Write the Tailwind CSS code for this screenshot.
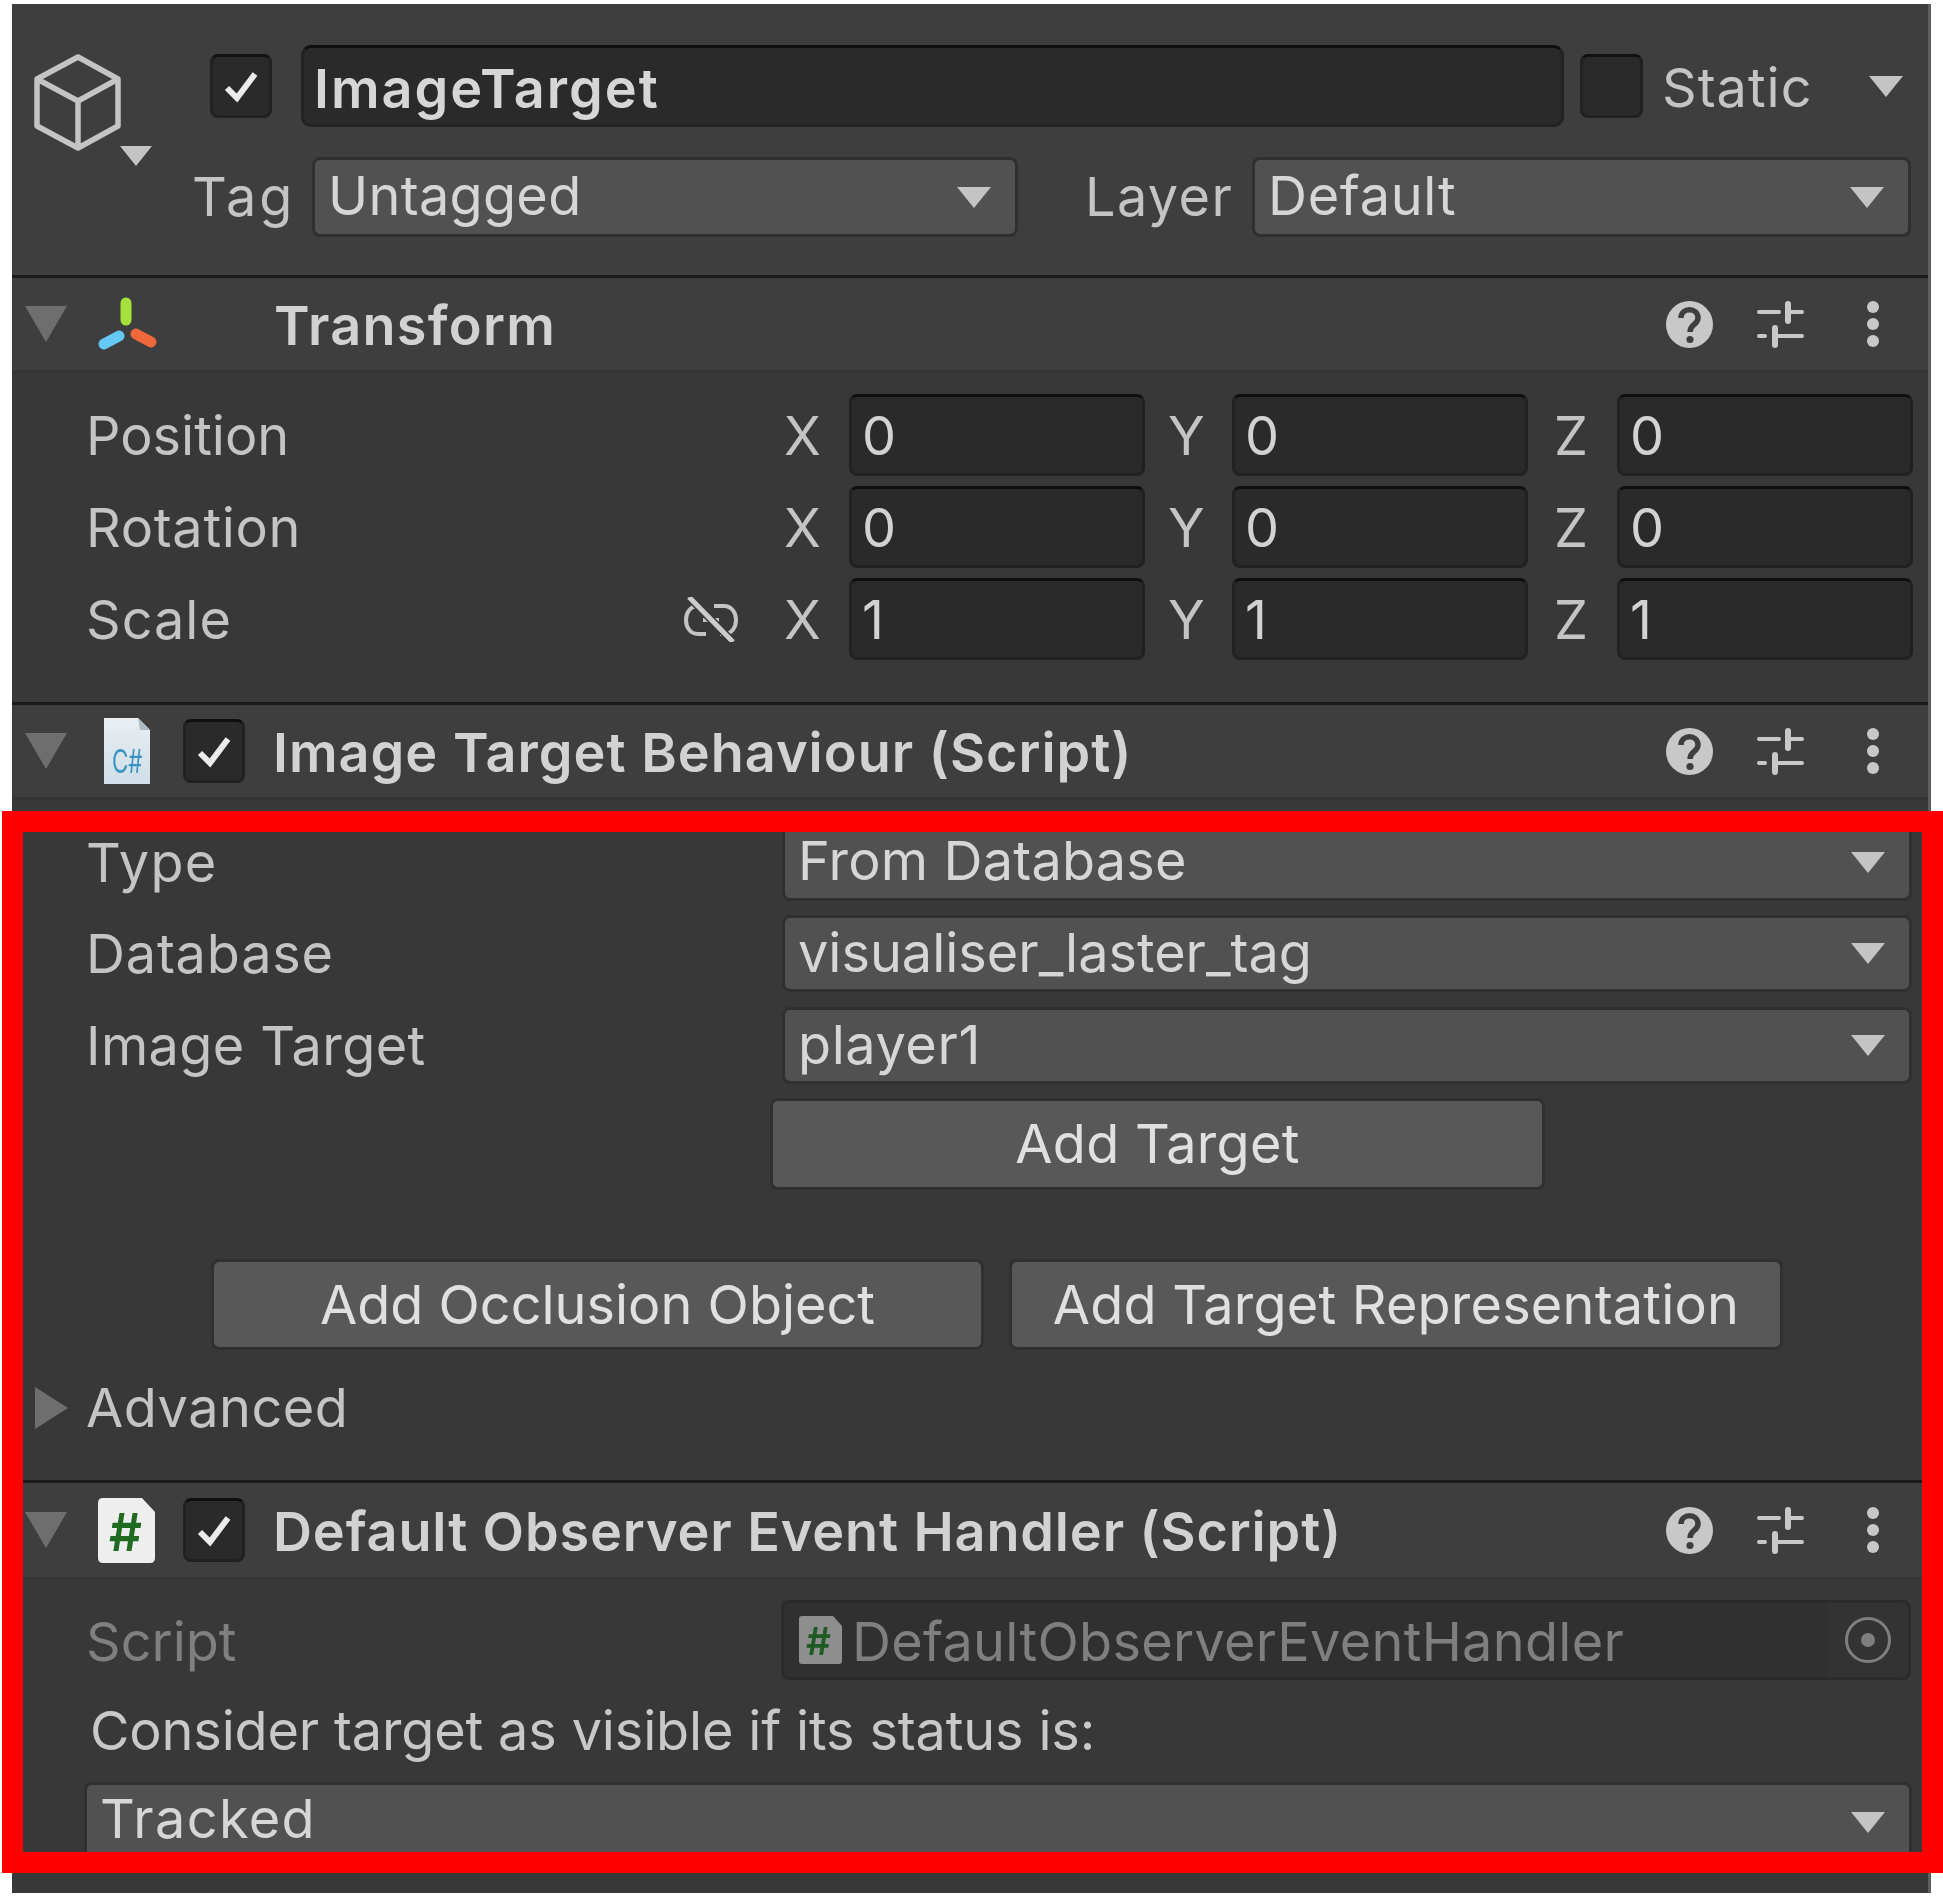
<!DOCTYPE html>
<html lang="en">
<head>
  <meta charset="UTF-8" />
  <title>ImageTarget - Inspector</title>
  <script src="https://cdn.jsdelivr.net/npm/@tailwindcss/browser@4"></script>
</head>
<body class="bg-white">
  <svg class="hidden">
    <symbol id="tri" viewBox="0 0 34 21"><path d="M0 0H34L17 21Z" fill="#c4c4c4"/></symbol>
    <symbol id="fold" viewBox="0 0 42 36"><path d="M0 0H42L21 36Z" fill="#6e6e6e"/></symbol>
    <symbol id="check" viewBox="0 0 36 34"><path d="M4 19L14 29L32 5" fill="none" stroke="#ececec" stroke-width="6"/></symbol>
    <symbol id="help" viewBox="0 0 47 47">
      <circle cx="23.5" cy="23.5" r="23.5" fill="#c8c8c8"/>
      <path d="M15 17C15 6 32 6 32 17C32 24 24 23 24 31" fill="none" stroke="#3e3e3e" stroke-width="5.5"/>
      <circle cx="24" cy="38.5" r="3.6" fill="#3e3e3e"/>
    </symbol>
    <symbol id="sliders" viewBox="0 0 47 47">
      <g stroke="#c8c8c8" stroke-linecap="round" fill="none">
        <path d="M2 11H22M34 11H45M2 35H8M20 35H45" stroke-width="4"/>
        <path d="M31 3V20M18 27V44" stroke-width="6"/>
      </g>
    </symbol>
    <symbol id="dots" viewBox="0 0 12 46">
      <circle cx="6" cy="6" r="6" fill="#c8c8c8"/><circle cx="6" cy="23" r="6" fill="#c8c8c8"/><circle cx="6" cy="40" r="6" fill="#c8c8c8"/>
    </symbol>
  </svg>

  <div class="relative h-[1897px] w-[1943px] overflow-hidden font-['Inter',sans-serif] text-[#c4c4c4]">
    <div class="absolute left-[12px] top-[4px] flex h-[1889px] w-[1919px] flex-col border-r-[3px] border-[#5e5e5e] bg-[#383838] text-[54px] leading-none blur-[0.6px]">

      <!-- object header -->
      <div class="flex h-[271px] shrink-0 bg-[#3e3e3e] pt-[41px]">
        <div class="w-[180px] shrink-0 pl-[21px] pt-[9px]">
          <svg class="h-[112px] w-[119px]" viewBox="0 0 119 112" fill="none">
            <path d="M45 3L85 25V72L45 94L4 72V25Z M4 25L45 47L85 25 M45 47V94" stroke="#c4c4c4" stroke-width="5.5" stroke-linejoin="round"/>
            <path d="M87 92H119L103 112Z" fill="#c4c4c4"/>
          </svg>
        </div>
        <div class="flex flex-1 flex-col">
          <div class="flex h-[82px] items-center pl-[18px]">
            <div class="flex h-[64px] w-[62px] items-center justify-center rounded-[8px] border-[3px] border-[#212121] border-t-[#111111] bg-[#2a2a2a]"><svg class="h-[34px] w-[36px]"><use href="#check"/></svg></div>
            <div class="ml-[29px] flex h-[82px] w-[1263px] items-center rounded-[10px] border-[3px] border-[#232323] border-t-[#0f0f0f] bg-[#2a2a2a] pl-[10px] pt-[6px] font-semibold tracking-[2px] text-[#d6d6d6]">ImageTarget</div>
            <div class="ml-[16px] h-[64px] w-[63px] rounded-[8px] border-[3px] border-[#212121] border-t-[#111111] bg-[#2a2a2a]"></div>
            <span class="ml-[19px] w-[207px] pt-[3px] tracking-[1px]">Static</span>
            <svg class="h-[21px] w-[34px]"><use href="#tri"/></svg>
          </div>
          <div class="mt-[30px] flex h-[80px] items-center">
            <span class="w-[120px] tracking-[3px]">Tag</span>
            <div class="flex h-[80px] w-[706px] items-center justify-between rounded-[8px] border-[3px] border-[#303030] bg-[#515151] pb-[3px] pl-[13px] pr-[24px] tracking-[0.3px] text-[#d6d6d6]">Untagged<svg class="mt-[3px] h-[21px] w-[34px]"><use href="#tri"/></svg></div>
            <span class="ml-[67px] w-[167px] tracking-[1.4px]">Layer</span>
            <div class="flex h-[80px] w-[659px] items-center justify-between rounded-[8px] border-[3px] border-[#303030] bg-[#515151] pb-[3px] pl-[13px] pr-[24px] tracking-[0.7px] text-[#d6d6d6]">Default<svg class="mt-[3px] h-[21px] w-[34px]"><use href="#tri"/></svg></div>
          </div>
        </div>
      </div>

      <!-- transform -->
      <div class="flex h-[98px] shrink-0 items-center border-y-[3px] border-t-[#1a1a1a] border-b-[#353535] bg-[#3e3e3e] pl-[13px]">
        <svg class="h-[36px] w-[42px]"><use href="#fold"/></svg>
        <svg class="ml-[31px] h-[54px] w-[59px]" viewBox="0 0 59 54" fill="none" stroke-linecap="round" stroke-width="11">
          <path d="M28 6V23" stroke="#a5e03c"/>
          <path d="M6 47L21 39" stroke="#66c8f5"/>
          <path d="M38 37L53 45" stroke="#f0673a"/>
        </svg>
        <span class="ml-[117px] flex-1 pt-[3px] font-semibold tracking-[1.3px] text-[#d2d2d2]">Transform</span>
        <svg class="h-[47px] w-[47px]"><use href="#help"/></svg>
        <svg class="ml-[44px] h-[47px] w-[47px]"><use href="#sliders"/></svg>
        <svg class="ml-[63px] mr-[49px] h-[46px] w-[12px]"><use href="#dots"/></svg>
      </div>
      <div class="flex h-[329px] shrink-0 flex-col gap-[10px] pl-[74px] pt-[21px]">
        <div class="flex h-[82px] items-center">
          <span class="w-[698px] pt-[2px]">Position</span>
          <span class="w-[65px] pt-[2px]">X</span>
          <div class="flex h-full w-[296px] items-center rounded-[8px] border-[3px] border-[#212121] border-t-[#0f0f0f] bg-[#2a2a2a] pl-[10px] pt-[2px] text-[#d2d2d2]">0</div>
          <span class="ml-[23px] w-[64px] pt-[2px]">Y</span>
          <div class="flex h-full w-[296px] items-center rounded-[8px] border-[3px] border-[#212121] border-t-[#0f0f0f] bg-[#2a2a2a] pl-[10px] pt-[2px] text-[#d2d2d2]">0</div>
          <span class="ml-[26px] w-[63px] pt-[2px]">Z</span>
          <div class="flex h-full w-[296px] items-center rounded-[8px] border-[3px] border-[#212121] border-t-[#0f0f0f] bg-[#2a2a2a] pl-[10px] pt-[2px] text-[#d2d2d2]">0</div>
        </div>
        <div class="flex h-[82px] items-center">
          <span class="w-[698px] pt-[2px] tracking-[0.7px]">Rotation</span>
          <span class="w-[65px] pt-[2px]">X</span>
          <div class="flex h-full w-[296px] items-center rounded-[8px] border-[3px] border-[#212121] border-t-[#0f0f0f] bg-[#2a2a2a] pl-[10px] pt-[2px] text-[#d2d2d2]">0</div>
          <span class="ml-[23px] w-[64px] pt-[2px]">Y</span>
          <div class="flex h-full w-[296px] items-center rounded-[8px] border-[3px] border-[#212121] border-t-[#0f0f0f] bg-[#2a2a2a] pl-[10px] pt-[2px] text-[#d2d2d2]">0</div>
          <span class="ml-[26px] w-[63px] pt-[2px]">Z</span>
          <div class="flex h-full w-[296px] items-center rounded-[8px] border-[3px] border-[#212121] border-t-[#0f0f0f] bg-[#2a2a2a] pl-[10px] pt-[2px] text-[#d2d2d2]">0</div>
        </div>
        <div class="flex h-[82px] items-center">
          <span class="w-[598px] pt-[2px] tracking-[1px]">Scale</span>
          <svg class="h-[45px] w-[54px]" viewBox="0 0 54 45" fill="none" stroke="#c4c4c4" stroke-width="4">
            <path d="M18 9H14C-2 9 -2 37 14 37H22M30 9H40C56 9 56 37 40 37H36M19 23H35"/>
            <path d="M5 0L49 45" stroke="#383838" stroke-width="8"/>
            <path d="M5 0L49 45" stroke="#cccccc" stroke-width="5"/>
          </svg>
          <span class="ml-[46px] w-[65px] pt-[2px]">X</span>
          <div class="flex h-full w-[296px] items-center rounded-[8px] border-[3px] border-[#212121] border-t-[#0f0f0f] bg-[#2a2a2a] pl-[10px] pt-[2px] text-[#d2d2d2]">1</div>
          <span class="ml-[23px] w-[64px] pt-[2px]">Y</span>
          <div class="flex h-full w-[296px] items-center rounded-[8px] border-[3px] border-[#212121] border-t-[#0f0f0f] bg-[#2a2a2a] pl-[10px] pt-[2px] text-[#d2d2d2]">1</div>
          <span class="ml-[26px] w-[63px] pt-[2px]">Z</span>
          <div class="flex h-full w-[296px] items-center rounded-[8px] border-[3px] border-[#212121] border-t-[#0f0f0f] bg-[#2a2a2a] pl-[10px] pt-[2px] text-[#d2d2d2]">1</div>
        </div>
      </div>

      <!-- image target behaviour -->
      <div class="flex h-[98px] shrink-0 items-center border-y-[3px] border-t-[#1a1a1a] border-b-[#353535] bg-[#3e3e3e] pl-[13px]">
        <svg class="h-[36px] w-[42px]"><use href="#fold"/></svg>
        <svg class="ml-[37px] h-[66px] w-[46px]" viewBox="0 0 46 66">
          <defs>
            <linearGradient id="page" x1="0" y1="0" x2="0" y2="1"><stop offset="0" stop-color="#e9eef1"/><stop offset="1" stop-color="#cfdee7"/></linearGradient>
          </defs>
          <path d="M0 0H34L46 12V66H0Z" fill="url(#page)"/>
          <path d="M34 0L46 12H36Z" fill="#aebbc4"/>
          <text transform="translate(8 55) scale(0.7 1)" font-family="Inter" font-size="32" fill="#3b93c4">C#</text>
        </svg>
        <div class="ml-[33px] flex h-[64px] w-[62px] items-center justify-center rounded-[8px] border-[3px] border-[#212121] border-t-[#0f0f0f] bg-[#2a2a2a]"><svg class="h-[34px] w-[36px]"><use href="#check"/></svg></div>
        <span class="ml-[28px] flex-1 pt-[3px] font-semibold tracking-[1px] text-[#d2d2d2]">Image Target Behaviour (Script)</span>
        <svg class="h-[47px] w-[47px]"><use href="#help"/></svg>
        <svg class="ml-[44px] h-[47px] w-[47px]"><use href="#sliders"/></svg>
        <svg class="ml-[63px] mr-[49px] h-[46px] w-[12px]"><use href="#dots"/></svg>
      </div>
      <div class="flex h-[680px] shrink-0 flex-col pt-[24px]">
        <div class="flex h-[77px] items-center pl-[74px]">
          <span class="w-[696px] tracking-[1.3px]">Type</span>
          <div class="flex h-full w-[1130px] items-center justify-between rounded-[8px] border-[3px] border-[#303030] bg-[#515151] pb-[3px] pl-[13px] pr-[24px] tracking-[0.2px] text-[#d6d6d6]">From Database<svg class="mt-[3px] h-[21px] w-[34px]"><use href="#tri"/></svg></div>
        </div>
        <div class="mt-[14px] flex h-[77px] items-center pl-[74px]">
          <span class="w-[696px] tracking-[0.8px]">Database</span>
          <div class="flex h-full w-[1130px] items-center justify-between rounded-[8px] border-[3px] border-[#303030] bg-[#515151] pb-[2px] pl-[13px] pr-[24px] text-[#d6d6d6]">visualiser_laster_tag<svg class="mt-[2px] h-[21px] w-[34px]"><use href="#tri"/></svg></div>
        </div>
        <div class="mt-[15px] flex h-[77px] items-center pl-[74px]">
          <span class="w-[696px] tracking-[0.4px]">Image Target</span>
          <div class="flex h-full w-[1130px] items-center justify-between rounded-[8px] border-[3px] border-[#303030] bg-[#515151] pb-[2px] pl-[13px] pr-[24px] tracking-[0.6px] text-[#d6d6d6]">player1<svg class="mt-[2px] h-[21px] w-[34px]"><use href="#tri"/></svg></div>
        </div>
        <div class="ml-[758px] mt-[14px] flex h-[92px] w-[775px] items-center justify-center rounded-[8px] border-[3px] border-[#303030] bg-[#585858] tracking-[0.3px] text-[#e0e0e0]">Add Target</div>
        <div class="ml-[199px] mt-[69px] flex gap-[25px]">
          <div class="flex h-[91px] w-[773px] items-center justify-center rounded-[8px] border-[3px] border-[#303030] bg-[#585858] text-[#e0e0e0]">Add Occlusion Object</div>
          <div class="flex h-[91px] w-[774px] items-center justify-center rounded-[8px] border-[3px] border-[#303030] bg-[#585858] tracking-[0.2px] text-[#e0e0e0]">Add Target Representation</div>
        </div>
        <div class="mt-[32px] flex h-[52px] items-center pl-[23px]">
          <svg class="h-[42px] w-[33px]" viewBox="0 0 33 42"><path d="M0 0L33 21L0 42Z" fill="#6e6e6e"/></svg>
          <span class="ml-[18px] tracking-[0.5px]">Advanced</span>
        </div>
      </div>

      <!-- default observer event handler -->
      <div class="flex h-[100px] shrink-0 items-center border-y-[3px] border-t-[#1a1a1a] border-b-[#353535] bg-[#3e3e3e] pl-[13px]">
        <svg class="h-[36px] w-[42px]"><use href="#fold"/></svg>
        <svg class="ml-[31px] h-[65px] w-[57px]" viewBox="0 0 57 65">
          <path d="M5 0H44L57 14V60Q57 65 52 65H5Q0 65 0 60V5Q0 0 5 0Z" fill="#eeeeee"/>
          <text x="11" y="53" font-family="Inter" font-size="52" font-weight="600" textLength="33" lengthAdjust="spacingAndGlyphs" fill="#1f6b22">#</text>
        </svg>
        <div class="ml-[28px] flex h-[64px] w-[62px] items-center justify-center rounded-[8px] border-[3px] border-[#212121] border-t-[#0f0f0f] bg-[#2a2a2a]"><svg class="h-[34px] w-[36px]"><use href="#check"/></svg></div>
        <span class="ml-[28px] flex-1 pt-[3px] font-semibold tracking-[0.87px] text-[#d2d2d2]">Default Observer Event Handler (Script)</span>
        <svg class="h-[47px] w-[47px]"><use href="#help"/></svg>
        <svg class="ml-[44px] h-[47px] w-[47px]"><use href="#sliders"/></svg>
        <svg class="ml-[63px] mr-[49px] h-[46px] w-[12px]"><use href="#dots"/></svg>
      </div>
      <div class="flex flex-1 flex-col pt-[20px]">
        <div class="flex h-[80px] items-center pl-[74px]">
          <span class="w-[695px] pt-[3px] text-[#7f7f7f]">Script</span>
          <div class="flex h-full w-[1130px] items-center rounded-[8px] border-[3px] border-[#2b2b2b] bg-[#303030] pl-[15px] text-[#7f7f7f]">
            <svg class="h-[48px] w-[43px] shrink-0" viewBox="0 0 43 48">
              <path d="M3 0H34L43 10V45Q43 48 40 48H3Q0 48 0 45V3Q0 0 3 0Z" fill="#8e8e8e"/>
              <text x="7" y="39" font-family="Inter" font-size="38" font-weight="600" textLength="25" lengthAdjust="spacingAndGlyphs" fill="#1f5a22">#</text>
            </svg>
            <span class="ml-[10px] flex-1 pt-[3px] tracking-[0.3px]">DefaultObserverEventHandler</span>
            <div class="flex h-full w-[81px] items-center justify-center rounded-r-[6px] bg-[#333333]">
              <div class="flex h-[46px] w-[46px] items-center justify-center rounded-full border-[3px] border-[#7f7f7f]"><div class="h-[14px] w-[14px] rounded-full bg-[#7f7f7f]"></div></div>
            </div>
          </div>
        </div>
        <div class="mt-[21px] flex h-[60px] items-center pl-[78px] tracking-[-0.15px] text-[#c8c8c8]">Consider target as visible if its status is:</div>
        <div class="ml-[72px] mt-[21px] flex h-[80px] w-[1828px] items-center justify-between rounded-[8px] border-[3px] border-[#303030] bg-[#515151] pb-[6px] pl-[13px] pr-[24px] tracking-[1.4px] text-[#d6d6d6]">Tracked<svg class="mt-[6px] h-[21px] w-[34px]"><use href="#tri"/></svg></div>
      </div>
    </div>

    <!-- highlight drawn over the screenshot -->
    <div class="absolute left-[2px] top-[811px] h-[1062px] w-[1941px] border-[21px] border-[#ff0000]"></div>
  </div>
</body>
</html>
